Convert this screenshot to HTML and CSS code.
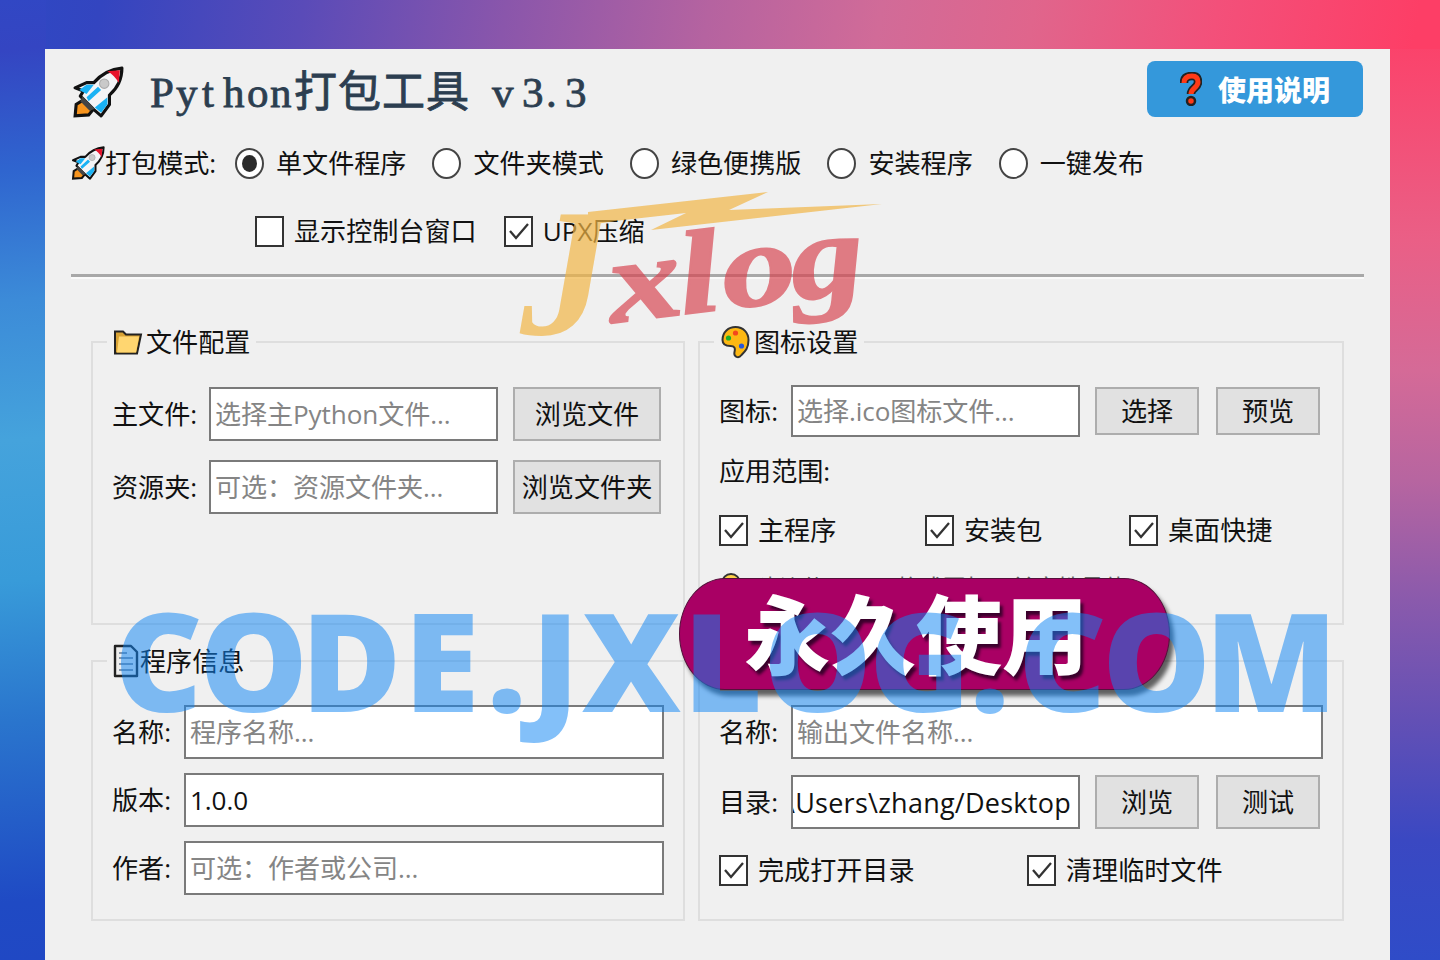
FILE: index.html
```html
<!DOCTYPE html>
<html lang="zh-CN">
<head>
<meta charset="utf-8">
<title>Python打包工具 v3.3</title>
<link rel="stylesheet" href="styles.css">
</head>
<body>
<svg class="defs" aria-hidden="true">
  <symbol id="rocket" viewBox="0 0 50 50">
    <path d="M3 48l1-11 8-5 9 9-5 6z" fill="#f7941d" stroke="#111" stroke-width="3"/>
    <path d="M14 16h7C28 8 36 3 48 2c0 12-5 20-12 26v9l-8 11-7-6-13-13 3-5-8-3z" fill="#f4f4f6" stroke="#111" stroke-width="3" stroke-linejoin="round"/>
    <path d="M14 18h7l-7 9-7-4zM34 30v7l-6 8-6-5zM14 30l11-10 3 3-12 11z" fill="#1ab2f4"/>
    <path d="M34 5l12-1-1 12c-3-5-6-8-11-11z" fill="#e8122a"/>
    <path d="M10 29l12 12-5 2-9-9z" fill="#444"/>
    <circle cx="31" cy="17" r="4.500" fill="#c9c9c9" stroke="#aaa"/>
  </symbol>
  <symbol id="tick" viewBox="0 0 25 27">
    <path d="M4 13l6 7L22 6" fill="none" stroke="#333" stroke-width="2.300"/>
  </symbol>
</svg>

<div class="edge-top"></div>
<div class="edge-left"></div>

<main class="window">
  <header class="header">
    <svg class="rocket-lg"><use href="#rocket"/></svg>
    <svg class="title" viewBox="0 0 450 60">
      <text y="40" x="1 27 53 74 98 121 145 189 233 277 321 343 373 397 416">Python打包工具 v3.3</text>
    </svg>
    <button class="help">
      <svg class="question" viewBox="0 0 22 34"><path d="M4 11c0-5 3-7 8-7s6 3 6 6c0 6-7 6-7 12" fill="none" stroke="#222" stroke-width="8.500"/><circle cx="11" cy="29" r="4" fill="#ff3a16" stroke="#222" stroke-width="2.500"/><path d="M4 11c0-5 3-7 8-7s6 3 6 6c0 6-7 6-7 12" fill="none" stroke="#ff3a16" stroke-width="5"/></svg>
      <span>使用说明</span>
    </button>
  </header>

  <div class="modes">
    <svg class="rocket-sm"><use href="#rocket"/></svg>
    <span class="modes-label">打包模式:</span>
    <label class="option"><i class="radio on"></i>单文件程序</label>
    <label class="option"><i class="radio"></i>文件夹模式</label>
    <label class="option"><i class="radio"></i>绿色便携版</label>
    <label class="option"><i class="radio"></i>安装程序</label>
    <label class="option"><i class="radio"></i>一键发布</label>
  </div>

  <div class="flags">
    <label class="check"><i class="box"></i>显示控制台窗口</label>
    <label class="check"><i class="box"><svg><use href="#tick"/></svg></i>UPX压缩</label>
  </div>
  <hr class="rule">

  <div class="panels">
    <fieldset class="panel files">
      <legend><svg class="ico-folder" viewBox="0 0 30 26"><path d="M2 2h8l3 3h15l-4 19H2z" fill="#d9a334" stroke="#222" stroke-width="2"/><path d="M6 7h20l-3 16H4z" fill="#ffd670"/></svg>文件配置</legend>
      <div class="row"><span class="name">主文件:</span><div class="field">选择主Python文件...</div><button class="btn">浏览文件</button></div>
      <div class="row"><span class="name">资源夹:</span><div class="field">可选：资源文件夹...</div><button class="btn">浏览文件夹</button></div>
    </fieldset>

    <fieldset class="panel icons">
      <legend><svg class="ico-palette" viewBox="0 0 30 34"><path d="M15 2c8 0 13 6 13 13 0 8-3 11-7 15-3 4-8 2-7-3 1-4 0-6-4-6-5 0-8-2-8-6C2 7 8 2 15 2z" fill="#fdb813" stroke="#333" stroke-width="2"/><circle cx="8" cy="13" r="2.600" fill="#1eaf28"/><circle cx="15" cy="8" r="2.600" fill="#f3481d"/><circle cx="21" cy="21" r="2.600" fill="#2857d8"/></svg>图标设置</legend>
      <div class="row"><span class="name">图标:</span><div class="field">选择.ico图标文件...</div><button class="btn">选择</button><button class="btn">预览</button></div>
      <div class="scope">应用范围:</div>
      <div class="checks three">
        <label class="check"><i class="box"><svg><use href="#tick"/></svg></i>主程序</label>
        <label class="check"><i class="box"><svg><use href="#tick"/></svg></i>安装包</label>
        <label class="check"><i class="box"><svg><use href="#tick"/></svg></i>桌面快捷</label>
      </div>
      <div class="hint"><svg class="bulb" viewBox="0 0 24 30"><circle cx="12" cy="11" r="9" fill="#ffd24a" stroke="#333" stroke-width="2"/><path d="M8 20h8v7H8z" fill="#777"/></svg>建议使用 .ico 格式图标，兼容性最佳</div>
    </fieldset>

    <fieldset class="panel info">
      <legend><svg class="ico-page" viewBox="0 0 26 34"><path d="M2 2h16l6 6v24H2z" fill="#eee" stroke="#222" stroke-width="2.400" stroke-linejoin="round"/><path d="M6 9h8M6 14h14M6 20h14M6 26h14" stroke="#8896a8" stroke-width="1.800"/></svg>程序信息</legend>
      <div class="row"><span class="name">名称:</span><div class="field">程序名称...</div></div>
      <div class="row"><span class="name">版本:</span><div class="field value">1.0.0</div></div>
      <div class="row"><span class="name">作者:</span><div class="field">可选：作者或公司...</div></div>
    </fieldset>

    <fieldset class="panel output">
      <div class="row"><span class="name">名称:</span><div class="field wide">输出文件名称...</div></div>
      <div class="row dir"><span class="name">目录:</span><div class="field value path">\Users\zhang/Desktop</div><button class="btn">浏览</button><button class="btn">测试</button></div>
      <div class="checks two">
        <label class="check"><i class="box"><svg><use href="#tick"/></svg></i>完成打开目录</label>
        <label class="check"><i class="box"><svg><use href="#tick"/></svg></i>清理临时文件</label>
      </div>
    </fieldset>
  </div>
</main>

<div class="pill"><span>永久使用</span></div>

<svg class="overlay" viewBox="0 0 1440 960">
  <g class="logo-gold">
    <text class="logo-j" transform="translate(520 334)" x="0" y="0">J</text>
    <path d="M588 212L768 192 729 210 882 204 651 230 686 213 588 224z"/>
  </g>
  <g class="logo-red">
    <text transform="translate(612 323) rotate(-7) scale(1.25 1)" x="0 57 92 147" y="0">xlog</text>
  </g>
  <text class="site" x="114 199 301 404 487 531 582 683 763 869 970 1018 1102 1205" y="712">CODE.JXLOG.COM</text>
</svg>
</body>
</html>
```
FILE: styles.css
```css
* { box-sizing: border-box; }
body {
  margin: 0;
  width: 1440px;
  height: 960px;
  overflow: hidden;
  position: relative;
  padding: 49px 50px 0 45px;
  font: 26.1px/36px "Open Sans", "Noto Sans CJK SC", sans-serif;
  color: #111;
  background: linear-gradient(#ff3c64 0, #ea5f86 240px, #d56a97 370px, #b765a0 480px, #8a5aac 600px, #6350b5 720px, #3a48c2 840px, #2f4cc8 960px);
}
.defs { position: absolute; width: 0; height: 0; }
.edge-top {
  position: absolute; left: 0; top: 0; width: 1440px; height: 49px;
  background: linear-gradient(100deg, #2e48c4 0, #3345c0 100px, #5a4bb8 300px, #8a56ab 500px, #b563a0 700px, #d16b98 870px, #e0658c 1020px, #f3507a 1200px, #fd3e66 1400px);
}
.edge-left {
  position: absolute; left: 0; top: 0; width: 46px; height: 960px;
  background: linear-gradient(175deg, #3147c4 0, #3445c2 50px, #2f65cf 170px, #3c8bd8 300px, #45a3dc 440px, #389bd9 580px, #2a75cd 720px, #1f4ac4 900px, #2048c4 960px);
}
.window {
  position: relative;
  width: 1345px;
  height: 911px;
  background: #f0f0f0;
  padding: 0 26px;
}
.header { display: flex; height: 84px; align-items: flex-start; }
.rocket-lg { width: 54px; height: 52px; margin-top: 17px; flex: none; }
.title { width: 450px; height: 60px; margin: 18px 0 0 24px; flex: none; }
.title text { font: 400 43px "Liberation Serif", "Noto Sans CJK SC", serif; fill: #2c3e50; stroke: #2c3e50; stroke-width: .8px; }
.help {
  margin: 12px 1px 0 auto;
  width: 216px;
  height: 56px;
  border: 0;
  border-radius: 8px;
  background: #3498db;
  color: #fff;
  font: 900 28px/56px "Noto Sans CJK SC", sans-serif;
  display: flex;
  align-items: center;
  justify-content: center;
  gap: 16px;
  padding: 0;
}
.question { width: 22px; height: 34px; }
.modes { display: flex; height: 60px; align-items: center; white-space: nowrap; }
.rocket-sm { width: 34px; height: 34px; flex: none; }
.modes-label { width: 130px; }
.option { display: flex; align-items: center; margin-right: 26px; }
.radio {
  width: 29px; height: 31px; margin-right: 12px;
  border: 2px solid #444; border-radius: 50%; background: #fff;
  display: grid; place-items: center;
}
.radio.on::after { content: ""; width: 15px; height: 17px; border-radius: 50%; background: #2b2b2b; }
.flags { display: flex; height: 76px; align-items: center; padding-left: 184px; gap: 27px; }
.check { display: flex; align-items: center; white-space: nowrap; }
.box {
  width: 29px; height: 31px; margin-right: 10px; flex: none;
  border: 2px solid #333; background: #fff; display: block;
}
.box svg { width: 25px; height: 27px; display: block; }
.rule { border: 0; height: 3px; background: #a8a8a8; margin: 5px 0 0; box-shadow: 0 2px #fafafa; }
.panels {
  display: grid;
  grid-template: 301px 278px / 594px 646px;
  gap: 18px 13px;
  margin: 47px 0 0 20px;
}
.panel { margin: 0; padding: 0 0 0 19px; min-width: 0; border: 2px solid #dedede; }
legend { display: flex; align-items: center; height: 36px; margin-left: -5px; padding: 0 6px; }
.ico-folder { width: 30px; height: 27px; margin-right: 3px; }
.ico-palette { width: 31px; height: 34px; margin-right: 3px; }
.ico-page { width: 26px; height: 34px; margin-right: 1px; }
.row { display: flex; align-items: center; height: 54px; white-space: nowrap; }
.name { flex: none; width: 72px; }
.field {
  width: 289px; height: 54px; border: 2px solid #7a7a7a; background: #fff;
  color: #858585; padding: 0 4px; line-height: 51px; overflow: hidden;
  letter-spacing: -.1px;
}
.value { color: #111; }
.btn {
  height: 54px; border: 2px solid #adadad; background: #e1e1e1; color: #111;
  font: inherit; padding: 0; white-space: nowrap;
}
.files { padding-top: 27px; }
.files .row { margin-bottom: 19px; }
.files .name { width: 97px; }
.files .btn { width: 148px; margin-left: 15px; }
.icons .row { height: 52px; margin-top: 25px; }
.icons .field { height: 52px; line-height: 49px; }
.icons .btn, .output .btn { width: 104px; margin-left: 15px; }
.icons .btn { height: 48px; }
.icons .btn + .btn, .output .btn + .btn { margin-left: 17px; }
.scope { margin-top: 16px; }
.checks { display: grid; }
.three { grid-template-columns: 206px 204px 200px; margin-top: 23px; }
.hint { display: flex; align-items: center; font-size: 23px; color: #666; margin-top: 21px; white-space: nowrap; }
.bulb { width: 24px; height: 30px; margin-right: 13px; }
.info { padding-top: 26px; }
.info .row { margin-bottom: 14px; }
.info .field { width: 480px; }
.output { padding-top: 43px; height: 261px; align-self: end; }
.output .wide { width: 532px; }
.output .dir { margin-top: 16px; }
.output .path { text-indent: -8px; padding: 0; font-size: 27px; letter-spacing: .25px; }
.two { grid-template-columns: 308px 280px; margin-top: 23px; }
.pill {
  position: absolute; left: 679px; top: 578px; width: 491px; height: 112px;
  border-radius: 46px / 56px; background: #a90064; border: 1px solid #55103b;
  box-shadow: 4px 6px 4px rgba(0, 0, 0, .6);
  color: #fff; font: 900 86px/104px "Noto Sans CJK SC", sans-serif;
  padding-left: 64px; white-space: nowrap; text-shadow: 3px 4px 3px rgba(30, 0, 30, .8);
}
.overlay { position: absolute; left: 0; top: 0; width: 1440px; height: 960px; }
.logo-gold { fill: #f1b545; opacity: .7; }
.logo-j { font: italic bold 182px "Liberation Serif", serif; }
.logo-red { opacity: .68; }
.logo-red text { font: italic bold 118px "Liberation Serif", serif; fill: #d74450; stroke: #d74450; stroke-width: 2px; }
.site { font: 900 137px "Noto Sans", "Open Sans", sans-serif; fill: rgb(14, 133, 245); opacity: .51; }
```
